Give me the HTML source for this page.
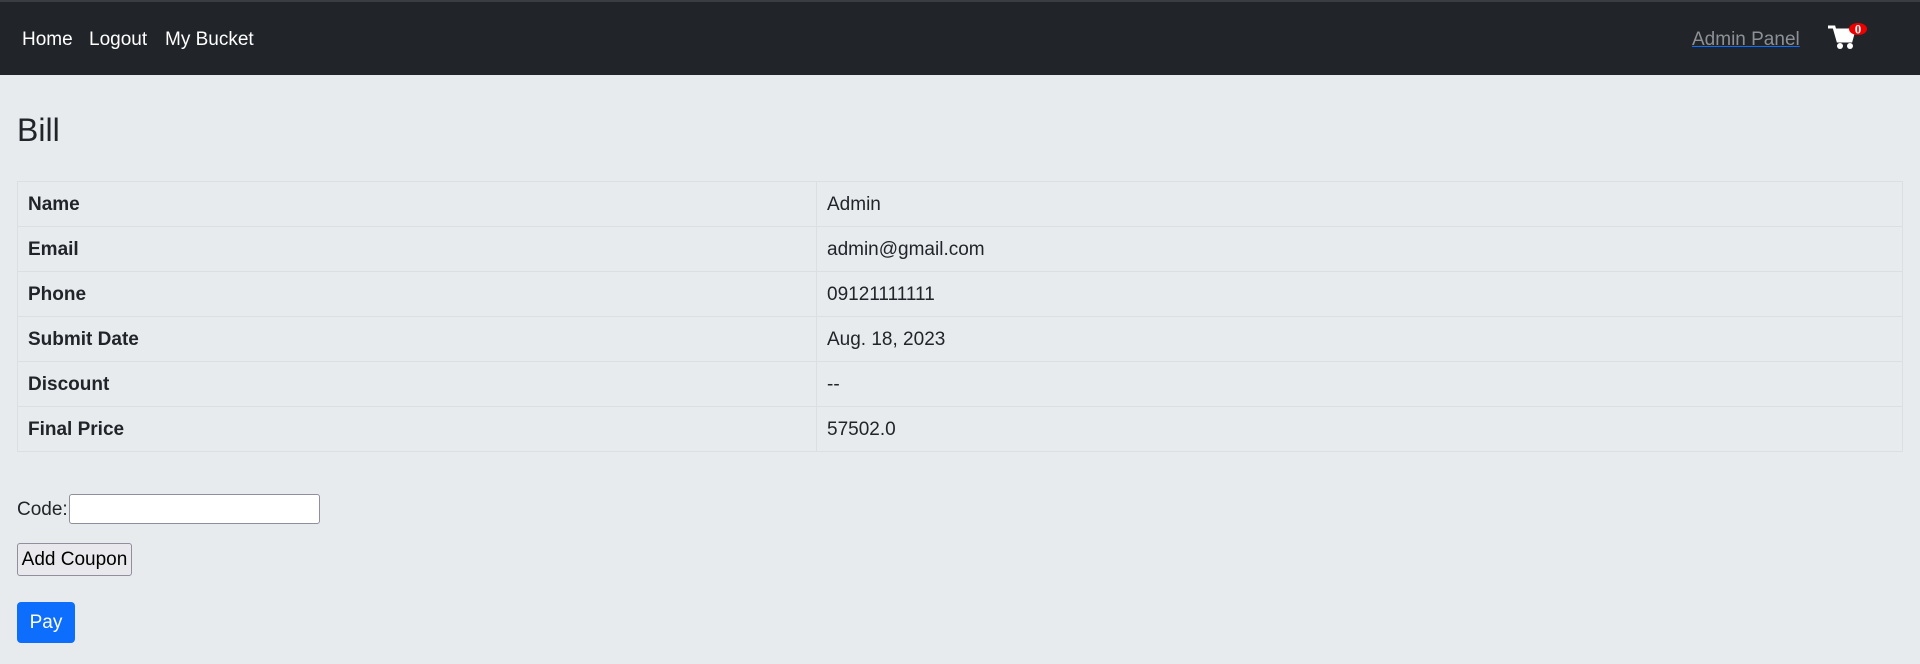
<!DOCTYPE html>
<html><head><style>
body{margin:0;background:#e8ebee;font-family:"Liberation Sans",sans-serif;color:#212529;font-size:19px;width:1920px;height:664px;overflow:hidden}
.nav{height:73px;background:#212529;border-top:2px solid #3a3e43;position:relative}
.nav a{position:absolute;top:27px;color:#fff;text-decoration:none;font-size:19px}
.ap{color:#8d9096!important;text-decoration:underline!important;text-decoration-color:#0d6efd!important}
h1{position:absolute;left:17px;top:112px;margin:0;font-size:32px;font-weight:normal}
table{position:absolute;left:17px;top:181px;width:1886px;border-collapse:collapse}
td{border:1px solid #dcdfe2;height:42px;padding:2px 10px 0;font-size:19px}
td:first-child{width:778px;font-weight:bold}
.lbl{position:absolute;left:17px;top:499px}
input{position:absolute;left:69px;top:494px;width:251px;height:30px;border:1px solid #8f8f9d;border-radius:3px;background:#fff;margin:0;padding:0;box-sizing:border-box}
.ac{position:absolute;left:17px;top:543px;width:115px;height:33px;border:1px solid #8f8f9d;border-radius:3px;background:#e9e8ed;font-size:19px;font-family:inherit;padding:0;color:#000}
.pay{position:absolute;left:17px;top:602px;width:58px;height:41px;background:#0d6efd;color:#fff;border-radius:4px;text-align:center;line-height:42px}
</style></head><body>
<div class="nav">
<a style="left:22px">Home</a><a style="left:89px">Logout</a><a style="left:165px">My Bucket</a>
<a class="ap" style="left:1692px">Admin Panel</a>
<svg style="position:absolute;left:1827px;top:20px" width="44" height="30" viewBox="0 0 44 30"><path d="M1 5h6l4 14h13l3-11H9" fill="none" stroke="#fff" stroke-width="3"/><path d="M9 8h18l-3 11H12z" fill="#fff"/><circle cx="13" cy="24" r="3" fill="#fff"/><circle cx="23" cy="24" r="3" fill="#fff"/><ellipse cx="31" cy="7" rx="9" ry="6" fill="#e00"/><text x="31" y="11.5" font-size="13" font-weight="bold" fill="#fff" text-anchor="middle" font-family="Liberation Serif">0</text></svg>
</div>
<h1>Bill</h1>
<table>
<tr><td>Name</td><td>Admin</td></tr>
<tr><td>Email</td><td>admin@gmail.com</td></tr>
<tr><td>Phone</td><td>09121111111</td></tr>
<tr><td>Submit Date</td><td>Aug. 18, 2023</td></tr>
<tr><td>Discount</td><td>--</td></tr>
<tr><td>Final Price</td><td>57502.0</td></tr>
</table>
<div class="lbl">Code:</div><input>
<button class="ac">Add Coupon</button>
<div class="pay">Pay</div>
</body></html>
